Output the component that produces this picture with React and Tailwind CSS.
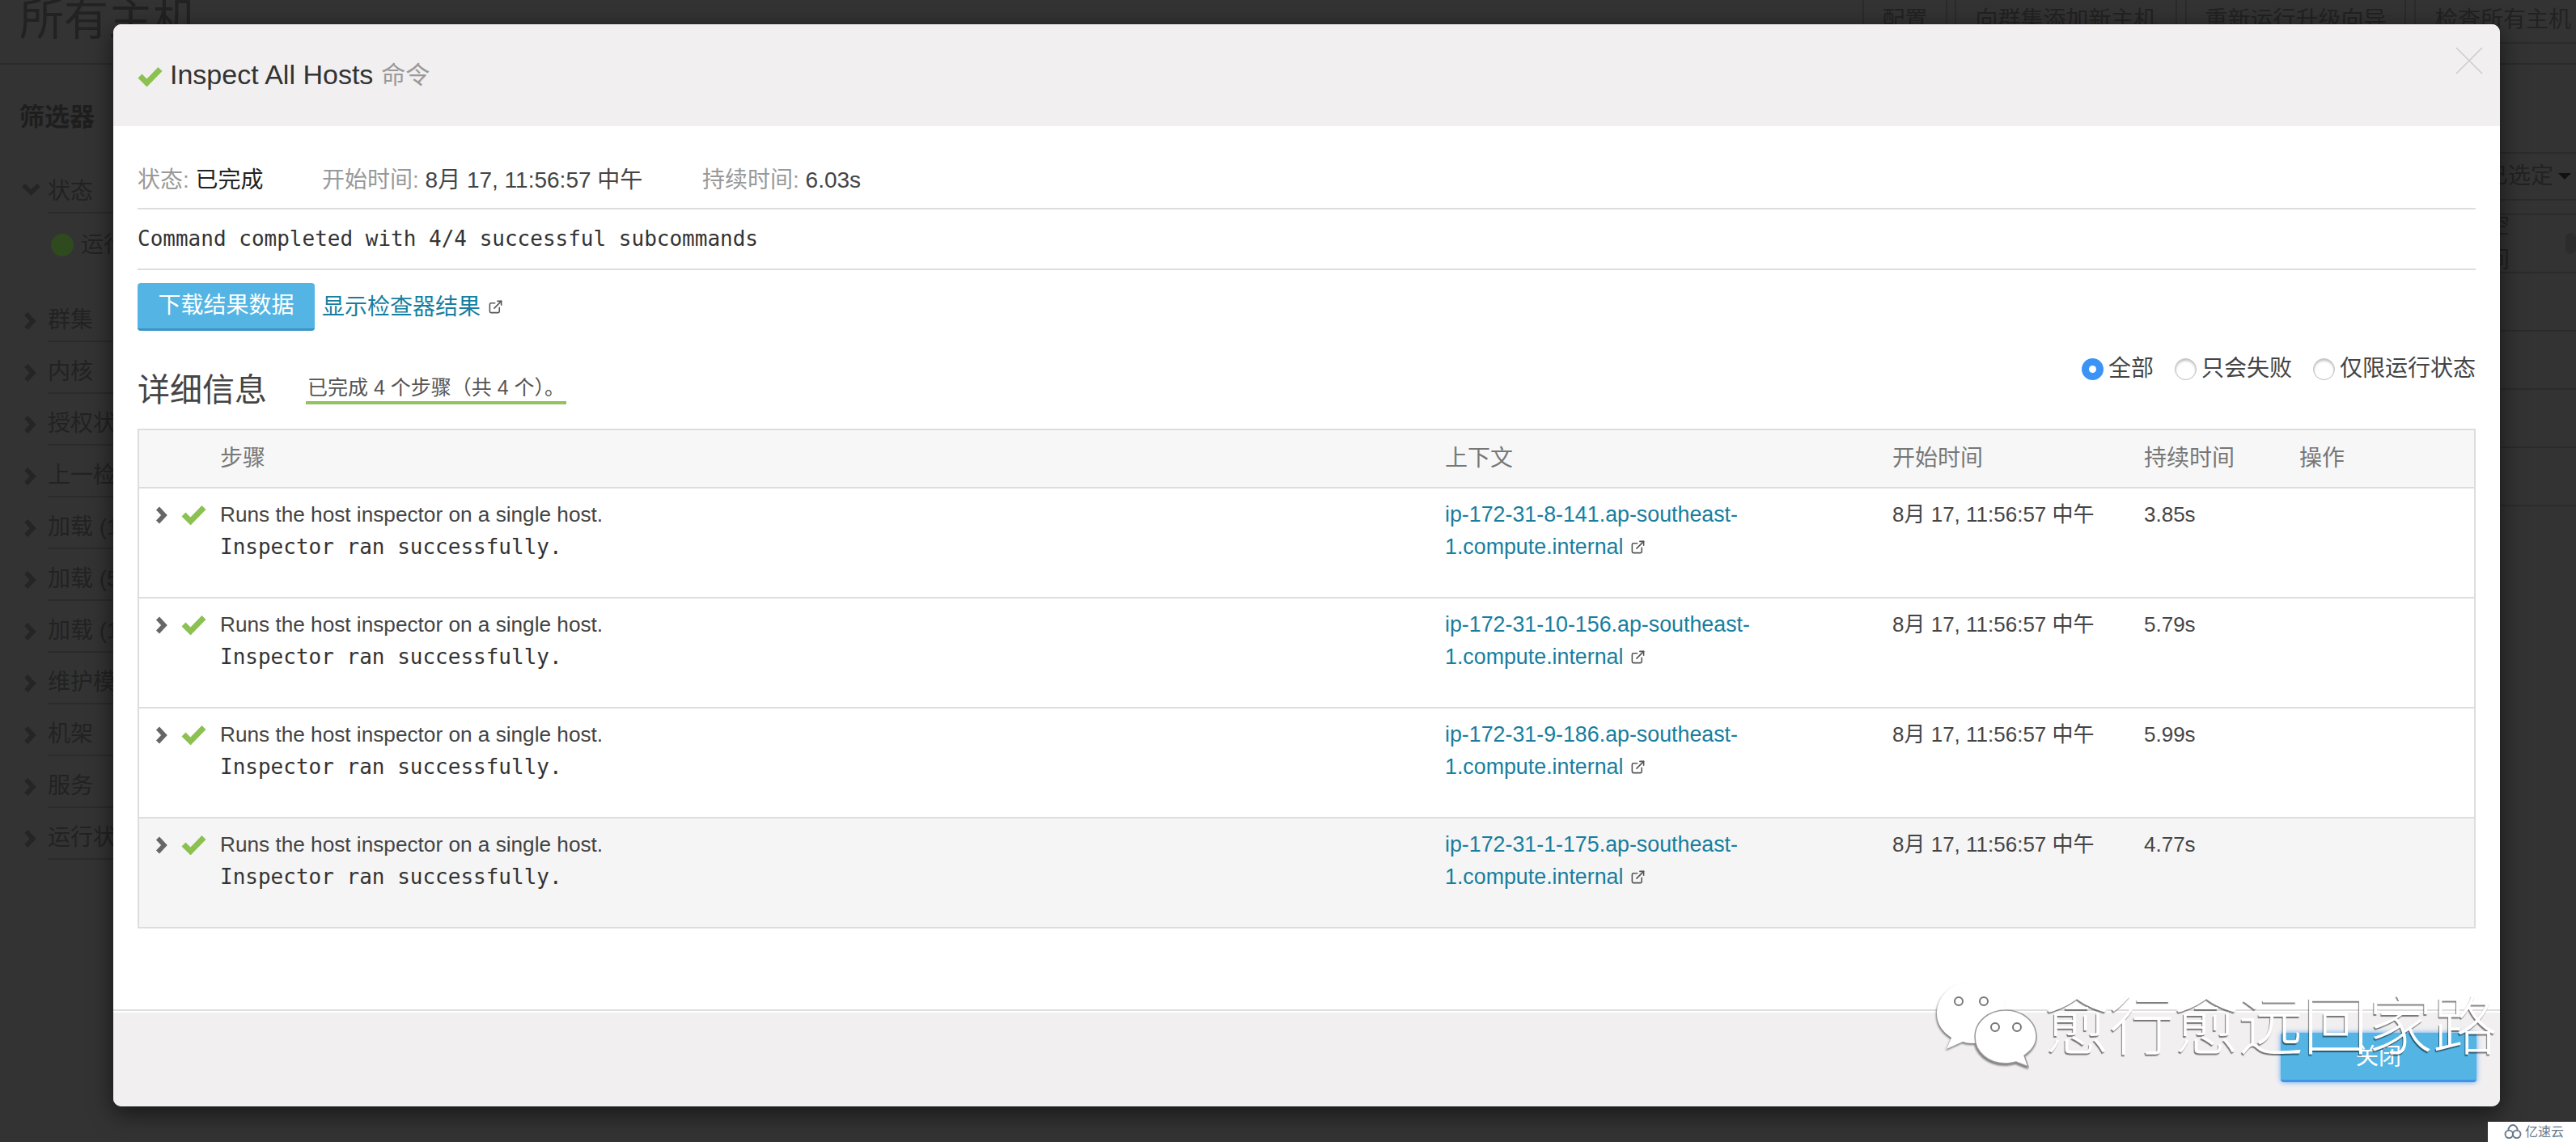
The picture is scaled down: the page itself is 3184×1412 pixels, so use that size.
import { ExternalLink } from "lucide-react";

const filters = [
    "群集",
    "内核",
    "授权状态",
    "上一检查",
    "加载 (1 分钟)",
    "加载 (5 分钟)",
    "加载 (15 分钟)",
    "维护模式",
    "机架",
    "服务",
    "运行状况",
];

const steps = [
    { host: "ip-172-31-8-141", time: "3.85s" },
    { host: "ip-172-31-10-156", time: "5.79s" },
    { host: "ip-172-31-9-186", time: "5.99s" },
    { host: "ip-172-31-1-175", time: "4.77s" },
];

const mono = "font-['DejaVu_Sans_Mono',monospace]";
const columns = "grid grid-cols-[100px_1514px_553px_311px_192px_1fr]";

function Check({ className }) {
    return (
        <svg className={className} viewBox="0 0 31 25" fill="none">
            <path d="M3 12L11.5 20.5L28 3.5" stroke="#8cc152" strokeWidth="7" />
        </svg>
    );
}

function Chevron({ className, color }) {
    return (
        <svg className={className} viewBox="0 0 15 21" fill="none">
            <path d="M3 2L11 10.5L3 19" stroke={color} strokeWidth="5.5" />
        </svg>
    );
}

function Page() {
    return (
        <div className="text-[#222]">
            <div className="h-[80px] border-b-2 border-[#2b2b2b] flex justify-between">
                <div className="pl-[24px] text-[55px] leading-[56px] -mt-[4px] whitespace-nowrap">所有主机</div>
                <div className="flex h-[54px] border-b-2 border-[#2b2b2b] text-[28px] leading-[50px] whitespace-nowrap">
                    <div className="w-[105px] border-x-2 border-[#2b2b2b] text-center">配置</div>
                    <div className="w-[275px] ml-[9px] border-x-2 border-[#2b2b2b] text-center">向群集添加新主机</div>
                    <div className="w-[273px] ml-[10px] border-x-2 border-[#2b2b2b] text-center">重新运行升级向导</div>
                    <div className="w-[200px] ml-[10px] pl-[24px] border-l-2 border-[#2b2b2b]">检查所有主机</div>
                </div>
            </div>
            <div className="flex justify-between">
                <div className="w-[420px]">
                    <div className="h-[120px] pt-[46px] pl-[24px] text-[31px] leading-[38px] font-bold text-[#1e1e1e]">筛选器</div>
                    <div className="flex h-[64px]">
                        <div className="w-[59px] pl-[27px] pt-[26px]">
                            <svg className="w-[23px] h-[16px]" viewBox="0 0 23 16" fill="none">
                                <path d="M2 3L11.5 12L21 3" stroke="#252525" strokeWidth="5.5" />
                            </svg>
                        </div>
                        <div className="flex-1 border-b-2 border-[#2b2b2b] pt-[18px] text-[28px] leading-[38px]">状态</div>
                    </div>
                    <div className="h-[95px] pl-[63px] pt-[20px] flex gap-[9px] text-[28px] leading-[38px]">
                        <div className="w-[28px] h-[28px] mt-[5px] rounded-full bg-[#2f4a1e]"></div>
                        <div>运行状况良好</div>
                    </div>
                    {filters.map((name) => (
                        <div key={name} className="flex h-[64px]">
                            <div className="w-[59px] pl-[29px] pt-[27px]">
                                <Chevron className="w-[16px] h-[22px]" color="#252525" />
                            </div>
                            <div className="flex-1 border-b-2 border-[#2b2b2b] pt-[18px] text-[28px] leading-[38px] whitespace-nowrap">{name}</div>
                        </div>
                    ))}
                </div>
                <div className="w-[400px] pt-[108px]">
                    <div className="h-[60px] border-y-2 border-[#2b2b2b] flex justify-end items-center gap-[6px] pr-[6px] text-[28px] whitespace-nowrap">
                        <span>已选定</span>
                        <span className="w-0 h-0 border-x-[8px] border-t-[8px] border-x-transparent border-t-[#111]"></span>
                    </div>
                    <div className="mt-[16px] h-[74px] border-y-2 border-[#2b2b2b] flex items-center pl-[290px] text-[28px]">
                        <span>空间</span>
                        <span className="ml-[43px] w-[14px] h-[26px] rounded-full bg-[#2c2c2c]"></span>
                    </div>
                    {[0, 1, 2, 3].map((i) => (
                        <div key={i} className="h-[72px] border-b-2 border-[#2b2b2b]"></div>
                    ))}
                </div>
            </div>
        </div>
    );
}

function Radio({ label, checked }) {
    return (
        <div className="flex items-center gap-[6px]">
            {checked ? (
                <div className="w-[27px] h-[27px] rounded-full bg-[#3b93f5] flex items-center justify-center">
                    <div className="w-[9px] h-[9px] rounded-full bg-white"></div>
                </div>
            ) : (
                <div className="w-[27px] h-[27px] rounded-full bg-white border border-[#bbb] shadow-[inset_0_2px_3px_rgba(0,0,0,0.25)]"></div>
            )}
            <span>{label}</span>
        </div>
    );
}

function Modal() {
    return (
        <div className="absolute left-[140px] top-[30px] w-[2950px] h-[1338px] flex flex-col bg-white rounded-[10px] overflow-hidden shadow-[0_8px_30px_rgba(0,0,0,0.6)] text-[#444]">
            <div className="relative h-[126px] shrink-0 bg-[#f1eff0] flex items-center pl-[30px] pb-[2px] text-[34px]">
                <Check className="w-[31px] h-[25px] mt-[4px]" />
                <span className="ml-[9px] text-[#333]">Inspect All Hosts</span>
                <span className="ml-[10px] text-[30px] text-[#999]">命令</span>
                <svg className="absolute right-[21px] top-[28px] w-[34px] h-[34px]" viewBox="0 0 34 34">
                    <path d="M1 1L33 33M33 1L1 33" stroke="#ccc" strokeWidth="1.5" fill="none" />
                </svg>
            </div>

            <div className="flex-1 px-[30px]">
                <div className="h-[103px] pb-[16px] flex items-end border-b-2 border-[#ddd] text-[28px] leading-[36px] whitespace-nowrap">
                    <div className="w-[228px]"><span className="text-[#999]">状态: </span><span className="text-[#222]">已完成</span></div>
                    <div className="w-[470px]"><span className="text-[#999]">开始时间: </span>8月 17, 11:56:57 中午</div>
                    <div><span className="text-[#999]">持续时间: </span>6.03s</div>
                </div>
                <div className={"h-[75px] flex items-center border-b-2 border-[#ddd] text-[26px] text-[#333] " + mono}>
                    Command completed with 4/4 successful subcommands
                </div>
                <div className="mt-[16px] h-[59px] flex items-center">
                    <button className="w-[219px] h-[59px] rounded-[4px] bg-[#54b5e4] border-b-[3px] border-[#3a94c4] text-white text-[28px]">下载结果数据</button>
                    <span className="ml-[9px] text-[28px] text-[#177e9f]">显示检查器结果</span>
                    <ExternalLink className="ml-[9px] w-[19px] h-[19px] text-[#555]" />
                </div>
                <div className="h-[121px] flex justify-between">
                    <div className="flex items-end pb-[24px]">
                        <div className="text-[40px] leading-[48px] text-[#444] w-[208px]">详细信息</div>
                        <div className="w-[322px] text-[25px] leading-[30px] pb-[2px] pl-[2px] border-b-[4px] border-[#95c15d] mb-[6px] text-[#555] whitespace-nowrap">已完成 4 个步骤（共 4 个）。</div>
                    </div>
                    <div className="flex pt-[30px] gap-[26px] text-[28px] leading-[34px] h-[64px] items-center text-[#444]">
                        <Radio label="全部" checked />
                        <Radio label="只会失败" />
                        <Radio label="仅限运行状态" />
                    </div>
                </div>

                <div className="border-2 border-[#ddd]">
                    <div className={columns + " h-[72px] items-center bg-[#f7f7f7] border-b-2 border-[#ddd] text-[28px] text-[#777]"}>
                        <div></div>
                        <div>步骤</div>
                        <div>上下文</div>
                        <div>开始时间</div>
                        <div>持续时间</div>
                        <div>操作</div>
                    </div>
                    {steps.map((step, i) => (
                        <div
                            key={step.host}
                            className={columns + " pt-[12px] text-[26.2px] leading-[40px] text-[#444] " + (i === 3 ? "h-[134px] bg-[#f5f5f5]" : "h-[136px] border-b-2 border-[#ddd]")}
                        >
                            <div className="flex pl-[20px] pt-[8px] gap-[17px]">
                                <Chevron className="w-[15px] h-[22px] mt-[2px]" color="#666" />
                                <Check className="w-[31px] h-[25px]" />
                            </div>
                            <div>
                                <div>Runs the host inspector on a single host.</div>
                                <div className={"text-[26px] text-[#333] " + mono}>Inspector ran successfully.</div>
                            </div>
                            <div className="text-[26.8px] text-[#177e9f] whitespace-nowrap">
                                <div>{step.host}.ap-southeast-</div>
                                <div className="flex items-center">
                                    1.compute.internal
                                    <ExternalLink className="ml-[9px] w-[19px] h-[19px] text-[#555]" />
                                </div>
                            </div>
                            <div className="text-[26px] whitespace-nowrap">8月 17, 11:56:57 中午</div>
                            <div className="text-[26px]">{step.time}</div>
                            <div></div>
                        </div>
                    ))}
                </div>
            </div>

            <div className="h-[120px] shrink-0 border-t-2 border-[#ddd] bg-[#f1eff0] shadow-[inset_0_2px_0_#fff] pt-[27px] pr-[29px] flex justify-end">
                <button className="w-[242px] h-[61px] rounded-[4px] bg-[#54b5e4] border-b-[3px] border-[#3f93e8] shadow-[0_0_6px_#5aa5f0] text-white text-[28px] pt-[2px]">关闭</button>
            </div>
        </div>
    );
}

function Watermark() {
    return (
        <div className="absolute left-[2393px] top-[1213px] flex items-start">
            <svg className="w-[126px] h-[107px] drop-shadow-[-1px_2px_1px_rgba(0,0,0,0.5)]" viewBox="0 0 126 107">
                <path d="M44 1C20 1 1 18 1 40C1 53 8 63 19 70L13 84L33 75C36 76 40 77 44 77C68 77 87 60 87 40C87 18 68 1 44 1Z" fill="#fff" />
                <circle cx="28" cy="25" r="5" fill="#fff" stroke="#777" strokeWidth="2" />
                <circle cx="59" cy="25" r="5" fill="#fff" stroke="#777" strokeWidth="2" />
                <path d="M86 36C65 36 48 50 48 69C48 88 65 102 86 102C91 102 95 101 99 100L114 106L109 92C118 86 124 78 124 69C124 50 107 36 86 36Z" fill="#fff" stroke="#999" strokeWidth="1.5" />
                <circle cx="73" cy="57" r="5" fill="#fff" stroke="#777" strokeWidth="2" />
                <circle cx="100" cy="57" r="5" fill="#fff" stroke="#777" strokeWidth="2" />
            </svg>
            <div className="ml-[8px] mt-[13px] text-[80px] leading-[88px] font-light text-white whitespace-nowrap [text-shadow:-1px_2px_1px_rgba(0,0,0,0.5)]">愈行愈远回家路</div>
        </div>
    );
}

function SpeedyBadge() {
    return (
        <div className="absolute right-0 bottom-0 w-[109px] h-[25px] bg-white flex items-center pl-[19px] gap-[3px] text-[16px] leading-[25px] text-[#66788a]">
            <svg className="w-[24px] h-[19px]" viewBox="0 0 24 20" fill="none" stroke="#66788a" strokeWidth="2">
                <circle cx="7" cy="13" r="5" />
                <circle cx="17" cy="13" r="5" />
                <path d="M6 8C6 4 9 1 12 1C15 1 18 4 18 8" />
            </svg>
            <span>亿速云</span>
        </div>
    );
}

export default function App() {
    return (
        <div className="relative w-[3184px] h-[1412px] overflow-hidden bg-[#333] font-['Liberation_Sans','Noto_Sans_CJK_SC',sans-serif]">
            <Page />
            <Modal />
            <Watermark />
            <SpeedyBadge />
        </div>
    );
}
